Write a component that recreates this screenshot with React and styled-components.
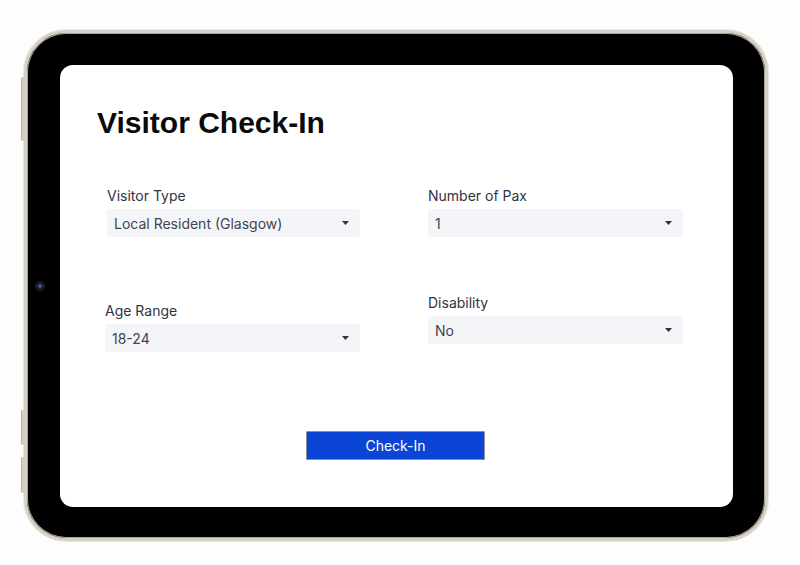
import React from "react";
import styled, { createGlobalStyle } from "styled-components";

const GlobalStyle = createGlobalStyle`
  html, body {
    margin: 0;
    padding: 0;
    background: #fdfdfd;
  }
  * {
    box-sizing: border-box;
  }
`;

const fields = {
  left: [
    { label: "Visitor Type", value: "Local Resident (Glasgow)", shift: 2 },
    { label: "Age Range", value: "18-24", shift: 0 },
  ],
  right: [
    { label: "Number of Pax", value: "1" },
    { label: "Disability", value: "No" },
  ],
};

const Caret = () => (
  <svg width="7" height="4" viewBox="0 0 7 4">
    <path d="M0 0 L7 0 L3.5 4 Z" fill="#31333f" />
  </svg>
);

const Field = ({ label, value, shift = 0 }) => (
  <FieldWrap $shift={shift}>
    <Label>{label}</Label>
    <Select>
      <SelectValue>{value}</SelectValue>
      <Caret />
    </Select>
  </FieldWrap>
);

const App = () => {
  return (
    <Page>
      <GlobalStyle />
      <Device>
        <SideButton $top={44} $height={64} />
        <SideButton $top={377} $height={35} />
        <SideButton $top={424} $height={36} />
        <Camera />
        <Screen>
          <Title>Visitor Check-In</Title>
          <FormGrid>
            <Column $gap={64}>
              {fields.left.map((f) => (
                <Field key={f.label} {...f} />
              ))}
            </Column>
            <Column $gap={56}>
              {fields.right.map((f) => (
                <Field key={f.label} {...f} />
              ))}
            </Column>
          </FormGrid>
          <ButtonRow>
            <CheckInButton>Check-In</CheckInButton>
          </ButtonRow>
        </Screen>
      </Device>
    </Page>
  );
};

export default App;

const Page = styled.div`
  width: 800px;
  height: 565px;
  padding: 30px 0 0 24px;
  background: #fdfdfd;
  overflow: hidden;
`;

const Device = styled.div`
  position: relative;
  width: 744px;
  height: 511px;
  padding: 32px 32px 31px 33px;
  border-radius: 42px;
  background: #000;
  border: 3px solid #d8d2c6;
  box-shadow: inset 0 0 0 1px #a9a398, 0 0 0 1px #ebe7df;
`;

const SideButton = styled.div`
  position: absolute;
  left: -6px;
  top: ${(p) => p.$top}px;
  width: 3px;
  height: ${(p) => p.$height}px;
  border-radius: 2px 0 0 2px;
  background: #d4cec3;
  border-left: 1px solid #b8b2a7;
`;

const Camera = styled.div`
  position: absolute;
  left: 8px;
  top: 248px;
  width: 10px;
  height: 10px;
  border-radius: 50%;
  background: radial-gradient(circle, #3a5fa8 0 1.5px, #1b1b1e 2px 100%);
`;

const Screen = styled.div`
  width: 673px;
  height: 442px;
  border-radius: 13px;
  background: #fff;
  padding: 43px 0 0 37px;
  display: flex;
  flex-direction: column;
`;

const Title = styled.h1`
  margin: 0;
  font-family: "Liberation Sans", Arial, sans-serif;
  font-weight: 700;
  font-size: 30px;
  line-height: 30px;
  color: #0a0a0a;
`;

const FormGrid = styled.div`
  display: grid;
  grid-template-columns: 255px 255px;
  column-gap: 68px;
  margin: 48px 0 0 8px;
`;

const Column = styled.div`
  display: flex;
  flex-direction: column;
  gap: ${(p) => p.$gap}px;
`;

const FieldWrap = styled.div`
  display: flex;
  flex-direction: column;
  gap: 3px;
  padding-left: ${(p) => p.$shift}px;
`;

const Label = styled.label`
  font-family: Inter, "Noto Sans", sans-serif;
  font-size: 14px;
  line-height: 20px;
  color: #31333f;
`;

const Select = styled.div`
  height: 28px;
  width: 100%;
  display: flex;
  align-items: center;
  justify-content: space-between;
  padding: 0 11px 0 7px;
  background: #f4f5f9;
  border-radius: 3px;
`;

const SelectValue = styled.span`
  font-family: Inter, "Noto Sans", sans-serif;
  font-size: 14px;
  color: #41444e;
`;

const ButtonRow = styled.div`
  display: flex;
  justify-content: center;
  margin-top: 79px;
  padding-right: 39px;
`;

const CheckInButton = styled.button`
  width: 179px;
  height: 29px;
  background: #0a45d6;
  color: #fff;
  border: 1px solid #8c8f99;
  border-radius: 1px;
  font-family: Inter, "Noto Sans", sans-serif;
  font-size: 14px;
  cursor: pointer;
`;
